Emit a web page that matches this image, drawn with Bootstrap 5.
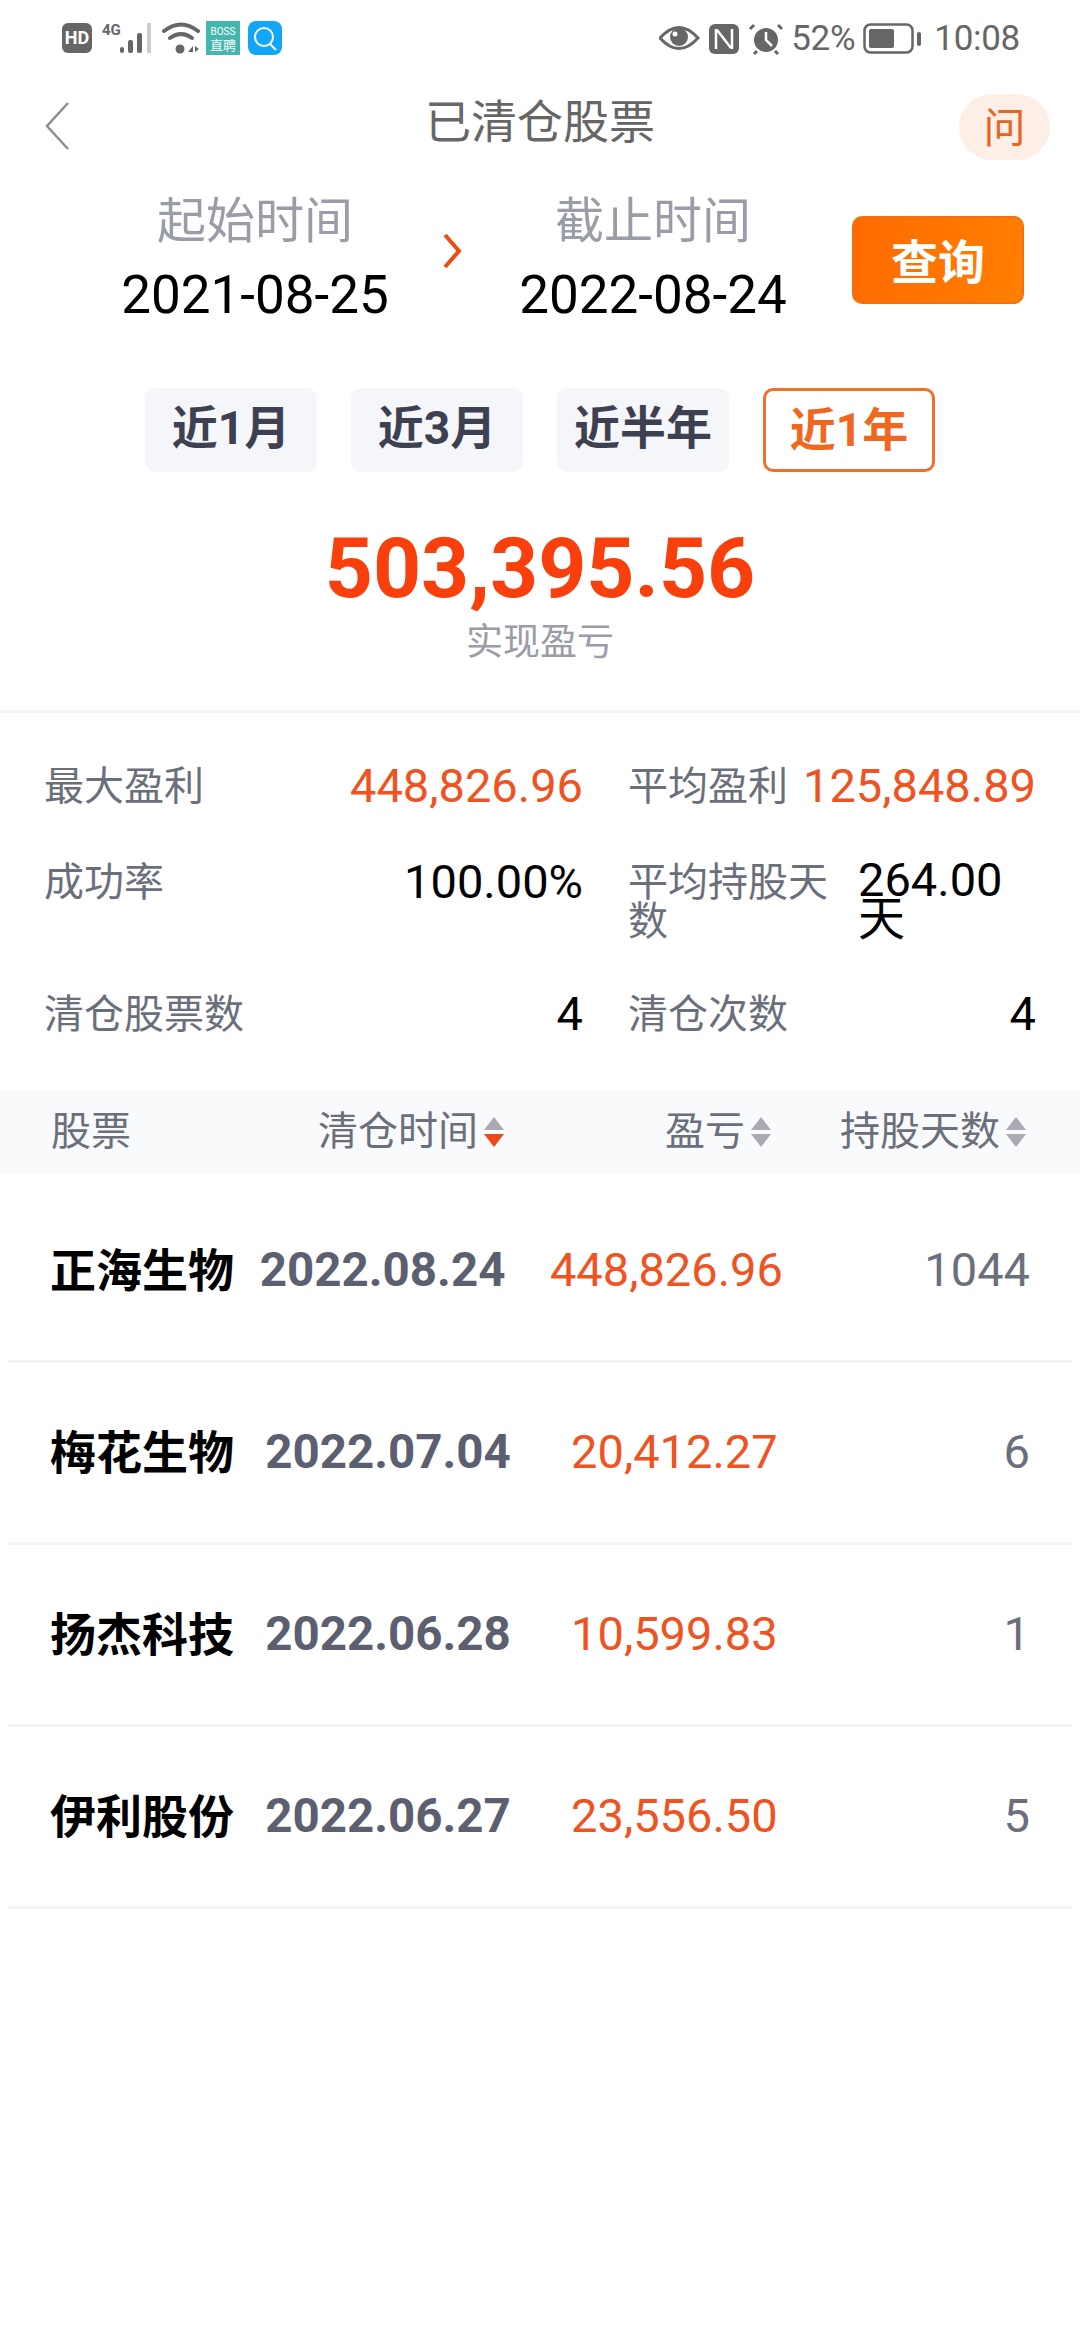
<!DOCTYPE html>
<html lang="zh-CN">
<head>
<meta charset="UTF-8">
<meta name="viewport" content="width=device-width, initial-scale=1">
<title>已清仓股票</title>
<link href="https://cdn.jsdelivr.net/npm/bootstrap@5.3.3/dist/css/bootstrap.min.css" rel="stylesheet">
<style>
body { width: 1080px; height: 2340px; background: #fff; font-family: Roboto, "Noto Sans CJK SC", sans-serif; color: #000; overflow: hidden; }
.stat-bar { height: 76px; padding: 21px 60px 0 62px; color: #666; }
.stat-txt { font-size: 35px; line-height: 36px; letter-spacing: -.3px; }
.stat-time { margin-left: 11px; }
.nav-head { height: 92px; position: relative; }
.nav-title { font-size: 46px; color: #666; }
.back-ico { position: absolute; left: 44px; top: 25px; }
.ask-dot { position: absolute; left: 959px; top: 18px; width: 91px; height: 66px; border-radius: 33px; background: #fdeee6; color: #e8641e; font-size: 42px; padding-top: 2px; }
.range-wrap { padding: 23px 0 0 85px; height: 220px; }
.range-col { width: 340px; text-align: center; }
.range-lbl { font-size: 49px; line-height: 62px; color: #9a9ca8; }
.range-val { font-size: 53px; line-height: 60px; margin-top: 12px; }
.range-arrow { margin: 42px 21px 0 17px; flex: none; }
.btn-query { width: 172px; height: 88px; margin: 25px 0 0 29px; padding: 4px 0 0; border: 2px solid #f4700f; border-radius: 10px; background: linear-gradient(100deg, #ff6a00, #ff8000); color: #fff; font-size: 47px; font-weight: 700; line-height: 1; }
.btn-query:hover { background: #ff6a00; color: #fff; border-color: #f4700f; }
.chip-row { gap: 34px; }
.chip { width: 172px; height: 84px; border-radius: 10px; background: #f5f6fa; color: #3d4050; font-size: 46px; font-weight: 700; padding-bottom: 4px; }
.chip-on { background: #fff; border: 3px solid #f0702a; color: #f0671f; padding-bottom: 0; }
.big-num { font-size: 84px; line-height: 100px; font-weight: 700; color: #f9400c; margin-top: 47px; }
.big-lbl { font-size: 37px; line-height: 48px; color: #9a9ca8; }
.hr-line { height: 3px; background: #f3f3f5; margin-top: 43px; }
.stat-grid { padding: 0 44px; display: grid; grid-template-columns: 539px 408px; column-gap: 45px; }
.stat-row1 { margin-top: 51px; }
.stat-row2 { margin-top: 52px; }
.stat-row3 { margin-top: 51px; }
.stat-cell { line-height: 44px; min-height: 44px; }
.stat-lbl { color: #6b6f7b; font-size: 40px; max-width: 205px; line-height: 39px; padding-top: 3px; }
.stat-val { font-size: 47px; line-height: 44px; }
.val-wrap { width: 178px; line-height: 39px; }
.txt-up { color: #ef5322; }
.tbl-head { height: 83px; background: #f9fafc; color: #6b6f7b; font-size: 40px; padding-left: 51px; margin-top: 54px; margin-bottom: 8px; }
.hd-name { width: 267px; }
.hd-time { width: 347px; }
.hd-pnl { width: 175px; }
.sort-ico { margin-left: 5px; }
.tbl-row { height: 182px; margin: 0 8px; padding: 0 42px; border-bottom: 3px solid #f3f3f5; }
.td-name { font-size: 46px; font-weight: 700; line-height: 1; flex: none; width: 183px; white-space: nowrap; }
.td-date { font-size: 47.5px; font-weight: 700; color: #5c5f70; flex: .1 0 auto; padding: 0 18px; text-align: center; }
.td-pnl { font-size: 47px; color: #ef5322; flex: .2 0 auto; text-align: center; }
.td-days { font-size: 47px; color: #6b6f7b; flex: .7 0 auto; text-align: right; }
</style>
</head>

<body>

<!-- status bar -->
<div class="stat-bar d-flex justify-content-between align-items-start">
  <svg width="220" height="34" viewBox="0 0 220 34">
    <rect x="0" y="2" width="30" height="30" rx="6" fill="#666"/>
    <text x="15" y="23" font-size="18" font-weight="700" fill="#fff" text-anchor="middle" font-family="Roboto">HD</text>
    <text x="40" y="14" font-size="15" font-weight="700" fill="#666" font-family="Roboto">4G</text>
    <rect x="58" y="26" width="4" height="6" rx="2" fill="#666"/>
    <rect x="66" y="19" width="5" height="13" rx="2" fill="#666"/>
    <rect x="75" y="12" width="5" height="20" rx="2" fill="#666"/>
    <rect x="85" y="2" width="4" height="30" fill="#ccc"/>
    <path d="M102 10 Q119 -3 136 10" fill="none" stroke="#666" stroke-width="4" stroke-linecap="round"/>
    <path d="M108 17 Q119 9 130 17" fill="none" stroke="#666" stroke-width="4" stroke-linecap="round"/>
    <circle cx="118" cy="28" r="4.5" fill="#666"/>
    <path d="M126 31 l5 -6 v6z M133 25 l4 3 -4 3z" fill="#666"/>
    <rect x="144" y="0" width="34" height="34" fill="#43b7ae"/>
    <text x="161" y="14" font-size="10" fill="#fff" text-anchor="middle" font-family="Roboto">BOSS</text>
    <text x="161" y="29" font-size="13" fill="#fff" text-anchor="middle" font-family="'Noto Sans CJK SC'">直聘</text>
    <rect x="186" y="0" width="34" height="34" rx="8" fill="#11a6f7"/>
    <circle cx="202" cy="16" r="9" fill="none" stroke="#fff" stroke-width="2"/>
    <path d="M208 23 l6 6" stroke="#fff" stroke-width="2"/>
  </svg>
  <div class="d-flex align-items-start">
    <svg width="124" height="34" viewBox="0 0 124 34">
      <path d="M1 17 Q20 -4 39 17 Q20 38 1 17z" fill="none" stroke="#666" stroke-width="3"/>
      <circle cx="20" cy="16" r="9" fill="#666"/>
      <circle cx="16" cy="13" r="2.5" fill="#fff"/>
      <rect x="50" y="3" width="30" height="30" rx="6" fill="#666"/>
      <path d="M57 8 v20 M73 8 v20 M58 9 L72 27" stroke="#fff" stroke-width="2.5" fill="none"/>
      <circle cx="107" cy="19" r="12" fill="#666"/>
      <path d="M107 11 v8 l6 6" stroke="#fff" stroke-width="2.5" fill="none"/>
      <path d="M95 4 l-4 4 M119 4 l4 4 M98 30 l-3 3 M116 30 l3 3" stroke="#666" stroke-width="3"/>
    </svg>
    <span class="stat-txt ms-2">52%</span>
    <svg width="60" height="34" viewBox="0 0 60 34" class="ms-2">
      <rect x="1.5" y="3.5" width="48" height="28" rx="6" fill="none" stroke="#666" stroke-width="2.5"/>
      <rect x="6" y="8" width="25" height="19" rx="2" fill="#666"/>
      <rect x="54" y="11" width="4" height="14" rx="2" fill="#666"/>
    </svg>
    <span class="stat-txt stat-time">10:08</span>
  </div>
</div>

<!-- header -->
<div class="nav-head d-flex align-items-center justify-content-center">
  <svg class="back-ico" width="26" height="50" viewBox="0 0 26 50"><path d="M24 2 L3 25 L24 48" fill="none" stroke="#8e8e93" stroke-width="2.5"/></svg>
  <span class="nav-title">已清仓股票</span>
  <div class="ask-dot d-flex align-items-center justify-content-center">问</div>
</div>

<!-- date range -->
<div class="range-wrap d-flex align-items-start">
  <div class="range-col">
    <div class="range-lbl">起始时间</div>
    <div class="range-val">2021-08-25</div>
  </div>
  <svg class="range-arrow" width="20" height="36" viewBox="0 0 20 36"><path d="M3 2 L17 18 L3 34" fill="none" stroke="#ef4a12" stroke-width="4"/></svg>
  <div class="range-col">
    <div class="range-lbl">截止时间</div>
    <div class="range-val">2022-08-24</div>
  </div>
  <button type="button" class="btn btn-query">查询</button>
</div>

<!-- quick ranges -->
<div class="chip-row d-flex justify-content-center">
  <div class="chip d-flex align-items-center justify-content-center">近1月</div>
  <div class="chip d-flex align-items-center justify-content-center">近3月</div>
  <div class="chip d-flex align-items-center justify-content-center">近半年</div>
  <div class="chip chip-on d-flex align-items-center justify-content-center">近1年</div>
</div>

<div class="text-center">
  <div class="big-num">503,395.56</div>
  <div class="big-lbl">实现盈亏</div>
</div>
<div class="hr-line"></div>

<!-- summary -->
<div class="stat-grid stat-row1">
  <div class="stat-cell d-flex justify-content-between"><span class="stat-lbl">最大盈利</span><span class="stat-val txt-up">448,826.96</span></div>
  <div class="stat-cell d-flex justify-content-between"><span class="stat-lbl">平均盈利</span><span class="stat-val txt-up">125,848.89</span></div>
</div>
<div class="stat-grid stat-row2">
  <div class="stat-cell d-flex justify-content-between"><span class="stat-lbl">成功率</span><span class="stat-val">100.00%</span></div>
  <div class="stat-cell d-flex justify-content-between"><span class="stat-lbl">平均持股天数</span><span class="stat-val val-wrap">264.00 天</span></div>
</div>
<div class="stat-grid stat-row3">
  <div class="stat-cell d-flex justify-content-between"><span class="stat-lbl">清仓股票数</span><span class="stat-val">4</span></div>
  <div class="stat-cell d-flex justify-content-between"><span class="stat-lbl">清仓次数</span><span class="stat-val">4</span></div>
</div>

<!-- table -->
<div class="tbl-head d-flex align-items-center">
  <div class="hd-name">股票</div>
  <div class="hd-time d-flex align-items-center">清仓时间<svg class="sort-ico" width="22" height="32" viewBox="0 0 22 32"><path d="M11 1 L21 14 H1z" fill="#a9aab4"/><path d="M11 31 L21 18 H1z" fill="#ea4a15"/></svg></div>
  <div class="hd-pnl d-flex align-items-center">盈亏<svg class="sort-ico" width="22" height="32" viewBox="0 0 22 32"><path d="M11 1 L21 14 H1z" fill="#a9aab4"/><path d="M11 31 L21 18 H1z" fill="#a9aab4"/></svg></div>
  <div class="d-flex align-items-center">持股天数<svg class="sort-ico" width="22" height="32" viewBox="0 0 22 32"><path d="M11 1 L21 14 H1z" fill="#a9aab4"/><path d="M11 31 L21 18 H1z" fill="#a9aab4"/></svg></div>
</div>

<div class="tbl-row d-flex align-items-center">
  <div class="td-name">正海生物</div><div class="td-date">2022.08.24</div><div class="td-pnl">448,826.96</div><div class="td-days">1044</div>
</div>
<div class="tbl-row d-flex align-items-center">
  <div class="td-name">梅花生物</div><div class="td-date">2022.07.04</div><div class="td-pnl">20,412.27</div><div class="td-days">6</div>
</div>
<div class="tbl-row d-flex align-items-center">
  <div class="td-name">扬杰科技</div><div class="td-date">2022.06.28</div><div class="td-pnl">10,599.83</div><div class="td-days">1</div>
</div>
<div class="tbl-row d-flex align-items-center">
  <div class="td-name">伊利股份</div><div class="td-date">2022.06.27</div><div class="td-pnl">23,556.50</div><div class="td-days">5</div>
</div>

</body>
</html>
